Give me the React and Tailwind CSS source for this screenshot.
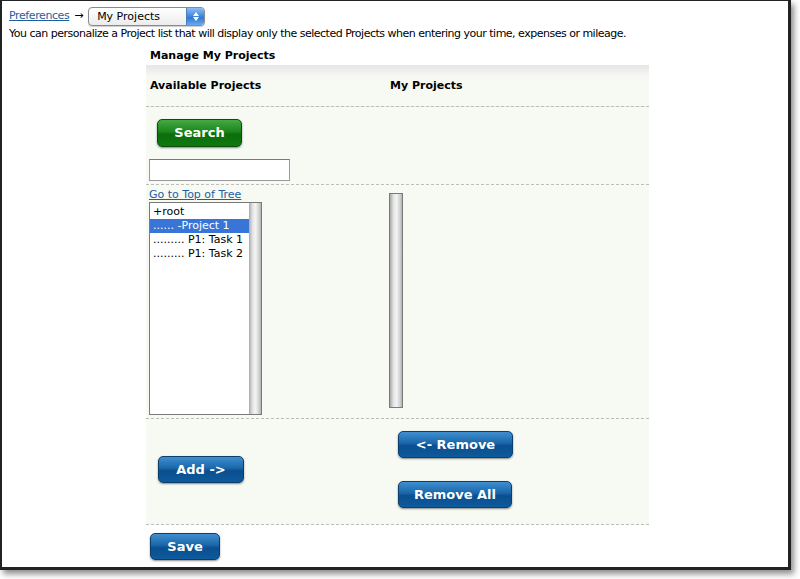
const FONT = "font-['DejaVu_Sans',Verdana,sans-serif]";

const TREE = [
  { label: '+root', selected: false },
  { label: '...... -Project 1', selected: true },
  { label: '......... P1: Task 1', selected: false },
  { label: '......... P1: Task 2', selected: false },
];

function BlueButton({ children, className = '' }) {
  return (
    <button
      className={`h-[27px] rounded-[5px] border border-[#0b3e6b] bg-[linear-gradient(#3f8fd0,#1a66a8_45%,#0a4f8e_55%,#0d5a9c)] text-[13px] font-bold text-white shadow-[0_1px_2px_rgba(0,0,0,0.45)] ${className}`}
    >
      {children}
    </button>
  );
}

function Scrollbar({ className = '' }) {
  return (
    <div
      className={`w-[12px] bg-[linear-gradient(90deg,#a9a9a9,#e4e4e4_30%,#f4f4f4_55%,#cfcfcf_85%,#b0b0b0)] ${className}`}
    />
  );
}

export default function App() {
  return (
    <div className={`w-[800px] h-[579px] bg-white ${FONT} text-[11px] text-black`}>
      <div className="w-[791px] h-[570px] border-t border-l-2 border-r-[3px] border-b-[3px] border-[#222] shadow-[3px_4px_6px_rgba(0,0,0,0.45)] bg-white pl-[7px] pt-[5px]">
        <div className="flex items-center h-[21px] tracking-[-0.4px]">
          <a href="#" className="text-[#1d5fa0] underline">Preferences</a>
          <span className="ml-[5px]">→</span>
          <div className="ml-[5px] flex h-[19px] w-[117px] items-stretch rounded-[4px] border border-[#8a8a8a] bg-[linear-gradient(#ffffff,#ececec)] shadow-[0_1px_1px_rgba(0,0,0,0.2)] overflow-hidden tracking-normal">
            <span className="flex-1 pl-[8px] leading-[17px]">My Projects</span>
            <span className="flex w-[18px] flex-col items-center justify-center gap-[1px] bg-[linear-gradient(#8fbcf2,#3d87e0_50%,#2a72d3_51%,#6aa9ef)] border-l border-[#4a7ec0]">
              <span className="block h-0 w-0 border-x-[3px] border-b-[4px] border-x-transparent border-b-white" />
              <span className="block h-0 w-0 border-x-[3px] border-t-[4px] border-x-transparent border-t-white" />
            </span>
          </div>
        </div>
        <p className="leading-[13px] tracking-[-0.5px]">
          You can personalize a Project list that will display only the selected Projects when entering your time, expenses or mileage.
        </p>

        <div className="ml-[137px] w-[503px]">
          <div className="pl-[4px] pt-[9px] pb-[3px] font-bold leading-[13px]">Manage My Projects</div>

          <div className="bg-[#f7f9f3]">
            <div className="grid grid-cols-[240px_1fr] h-[42px] items-center bg-[linear-gradient(#e6e6e6,#f5f6f2_10px,#f7f9f3_16px)] border-b border-dashed border-[#bdbdbd] font-bold">
              <div className="pl-[4px] pt-[1px]">Available Projects</div>
              <div className="pl-[4px] pt-[1px]">My Projects</div>
            </div>

            <div className="h-[78px] border-b border-dashed border-[#bdbdbd] pl-[3px] pt-[12px]">
              <button className="ml-[8px] h-[28px] w-[85px] rounded-[5px] border border-[#0c4d0c] bg-[linear-gradient(#45a845,#1d861d_45%,#0c6d0c_55%,#0f7a0f)] text-[13px] font-bold text-white shadow-[0_1px_2px_rgba(0,0,0,0.45)]">
                Search
              </button>
              <input
                type="text"
                className="mt-[12px] block h-[22px] w-[141px] border border-[#9a9a9a] border-t-[#7a7a7a] bg-white"
              />
            </div>

            <div className="grid grid-cols-[240px_1fr] h-[234px] border-b border-dashed border-[#bdbdbd]">
              <div className="pl-[3px] pt-[3px]">
                <a href="#" className="text-[#1d5fa0] underline leading-[13px] block">Go to Top of Tree</a>
                <div className="mt-[1px] flex h-[213px] w-[113px] border border-[#7a7a7a] bg-white">
                  <div className="flex-1 pt-[2px]">
                    {TREE.map((row) => (
                      <div
                        key={row.label}
                        className={`h-[14px] pl-[3px] leading-[14px] whitespace-nowrap ${row.selected ? 'bg-[#3875d7] text-white' : ''}`}
                      >
                        {row.label}
                      </div>
                    ))}
                  </div>
                  <Scrollbar />
                </div>
              </div>
              <div className="pl-[3px] pt-[8px]">
                <div className="flex h-[215px] w-[14px] border border-[#7a7a7a]">
                  <Scrollbar />
                </div>
              </div>
            </div>

            <div className="grid grid-cols-[240px_1fr] h-[106px] border-b border-dashed border-[#bdbdbd]">
              <div className="pl-[12px] pt-[37px]">
                <BlueButton className="w-[86px]">Add -&gt;</BlueButton>
              </div>
              <div className="flex flex-col gap-[23px] pl-[12px] pt-[12px]">
                <BlueButton className="w-[115px]">&lt;- Remove</BlueButton>
                <BlueButton className="w-[114px]">Remove All</BlueButton>
              </div>
            </div>
          </div>

          <div className="bg-white pl-[4px] pt-[8px]">
            <BlueButton className="w-[70px]">Save</BlueButton>
          </div>
        </div>
      </div>
    </div>
  );
}
